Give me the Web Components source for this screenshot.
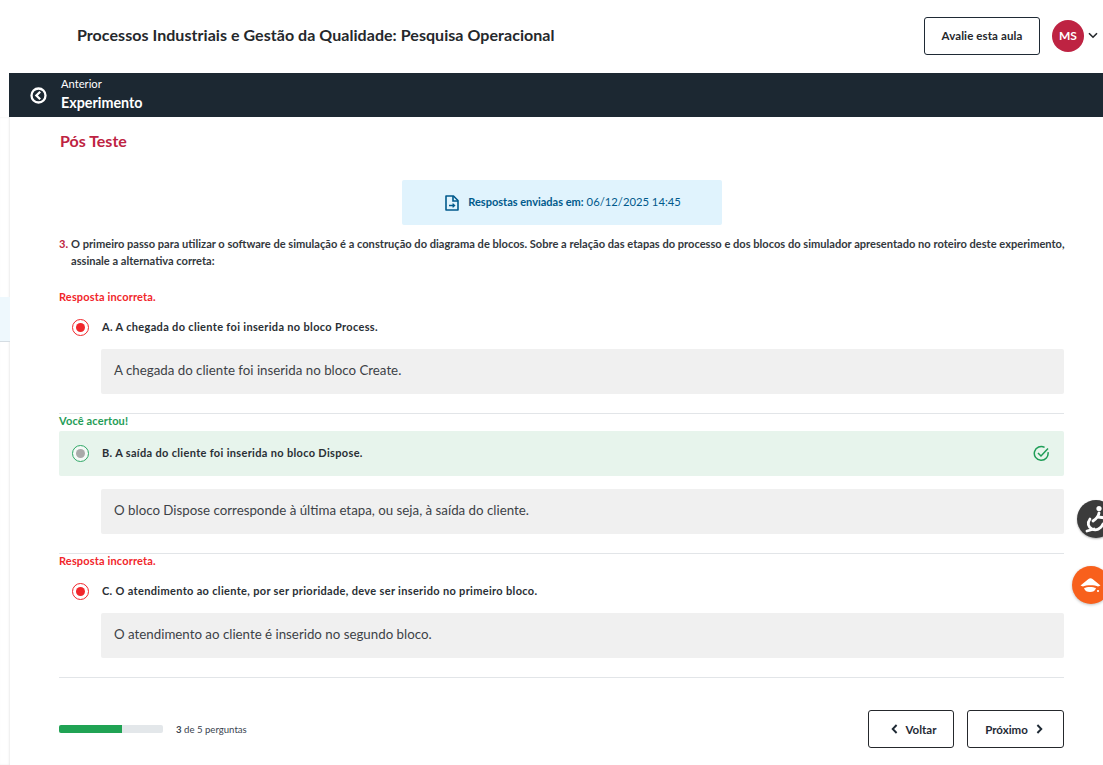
<!DOCTYPE html>
<html lang="pt-BR">
<head>
<meta charset="utf-8">
<title>Pós Teste</title>
<style>
html,body{margin:0;padding:0;height:765px;overflow:hidden;background:#fff;font-family:Lato,"Open Sans",sans-serif;color:#2a2f35}
</style>
</head>
<body>
<app-shell>
  <course-header slot="header" title-text="Processos Industriais e Gestão da Qualidade: Pesquisa Operacional"></course-header>
  <lesson-bar slot="bar"></lesson-bar>
  <section-title>Pós Teste</section-title>
  <submit-banner>06/12/2025 14:45</submit-banner>
  <question-text num="3.">O primeiro passo para utilizar o software de simulação é a construção do diagrama de blocos. Sobre a relação das etapas do processo e dos blocos do simulador apresentado no roteiro deste experimento, assinale a alternativa correta:</question-text>
  <answer-option state="wrong" label="A. A chegada do cliente foi inserida no bloco Process." top="21">A chegada do cliente foi inserida no bloco Create.</answer-option>
  <answer-option state="right" label="B. A saída do cliente foi inserida no bloco Dispose.">O bloco Dispose corresponde à última etapa, ou seja, à saída do cliente.</answer-option>
  <answer-option state="wrong" label="C. O atendimento ao cliente, por ser prioridade, deve ser inserido no primeiro bloco.">O atendimento ao cliente é inserido no segundo bloco.</answer-option>
  <quiz-footer></quiz-footer>
</app-shell>
<float-widgets></float-widgets>
<script>
function def(name, css, html){
  customElements.define(name, class extends HTMLElement{
    connectedCallback(){
      if(this.shadowRoot) return;
      const r=this.attachShadow({mode:'open'});
      const get=k=>this.getAttribute(k)||'';
      r.innerHTML='<style>'+css+'</style>'+(typeof html==='function'?html(get):html);
    }
  });
}
const chevL='<svg width="7" height="10" viewBox="0 0 7 10" fill="none" stroke="currentColor" stroke-width="1.9"><path d="M5.6 1 1.7 5l3.9 4"/></svg>';
const chevR='<svg width="7" height="10" viewBox="0 0 7 10" fill="none" stroke="currentColor" stroke-width="1.9"><path d="M1.4 1l3.9 4-3.9 4"/></svg>';

def('app-shell',`
  :host{display:block;height:765px;overflow:hidden}
  .cols{display:flex;height:648px}
  .side{flex:0 0 10px;width:10px;box-shadow:inset -1px 0 2px rgba(0,0,0,.08);padding-top:180px;box-sizing:border-box}
  .side i{display:block;height:45px;background:#eef8fd;border-bottom:1px solid #d5dde3;box-sizing:border-box}
  main{flex:1;min-width:0;padding:0 39px 0 49px;box-sizing:border-box}
  .barrow{padding-left:9px}
`,`<slot name="header"></slot><div class="barrow"><slot name="bar"></slot></div><div class="cols"><div class="side"><i></i></div><main><slot></slot></main></div>`);

def('course-header',`
  :host{display:flex;align-items:center;height:73px;box-sizing:border-box;padding:0 0 0 77px;background:#fff}
  h1{flex:1;margin:0;font:700 16px/22px Lato,sans-serif;color:#25282c;position:relative;top:-2px;letter-spacing:.05px}
  button{width:116px;height:38px;background:#fff;border:1px solid #1f2a35;border-radius:3px;font:700 11.5px Lato,sans-serif;color:#25282c;padding:0;position:relative;top:-1px;letter-spacing:.01em}
  .av{width:32px;height:32px;border-radius:50%;background:#be2342;color:#fff;font:700 12px/32px Lato,sans-serif;text-align:center;margin-left:12px;position:relative;top:-1px}
  svg{margin:0 5px 0 4px;color:#25282c;position:relative;top:-1px}
`,g=>`<h1>${g('title-text')}</h1><button>Avalie esta aula</button><div class="av">MS</div><svg width="10" height="7" viewBox="0 0 10 7" fill="none" stroke="currentColor" stroke-width="1.6"><path d="M1 1.2 5 5.2l4-4"/></svg>`);

def('lesson-bar',`
  :host{display:flex;align-items:center;height:44px;background:#1c2832;color:#fff;padding-left:21px}
  svg{flex:none;margin-right:14px}
  .t{display:flex;flex-direction:column}
  .a{font:400 11.2px/14px Lato,sans-serif;margin-top:-1px}
  .b{font:700 14.3px/18px Lato,sans-serif;margin-top:3px}
`,`<svg width="17" height="17" viewBox="0 0 17 17" fill="none" stroke="#fff" stroke-width="2.3"><circle cx="8.5" cy="8.5" r="7"/><path d="M10.2 4.8 6.4 8.5l3.8 3.7"/></svg><div class="t"><span class="a">Anterior</span><span class="b">Experimento</span></div>`);

def('section-title',`
  :host{display:block;font:700 16px/22px Lato,sans-serif;color:#be2342;padding:13px 0 0 1px}
`,`<slot></slot>`);

def('submit-banner',`
  :host{display:flex;align-items:center;justify-content:center;width:320px;height:45px;box-sizing:border-box;padding:0 0 2px 2px;margin:28px 0 0 343px;background:#e0f3fd;border-radius:2px;color:#005a8c;font:400 11px Lato,sans-serif}
  svg{margin-right:9px;flex:none;position:relative;top:1px}
  b{font-weight:700;margin-right:3px}
  span{font-size:11.25px}
`,`<svg width="14" height="16" viewBox="0 0 14 16" fill="none" stroke="#005a8c" stroke-width="1.6"><path d="M1 1h7.5L13 5.5V15H1z" stroke-linejoin="round"/><path d="M8 1v5h5" /><path d="M4 10.5h5.5M7.6 8.6l2 1.9-2 1.9" stroke-width="1.3"/></svg><b>Respostas enviadas em:</b><span><slot></slot></span>`);

def('question-text',`
  :host{display:flex;margin-top:10px;font:700 11.1px/17px Lato,sans-serif;color:#33383d;margin-right:-2px}
  .n{color:#be2342;flex:0 0 12px}
  div{flex:1;min-width:0}
`,g=>`<span class="n">${g('num')}</span><div><slot></slot></div>`);

def('answer-option',`
  :host{display:block}
  .status{font:700 11px/14px Lato,sans-serif;height:14px;letter-spacing:.15px}
  .wrong .status{color:#f1262b}
  .right .status{color:#1f9d57}
  .row{display:flex;align-items:center;height:45px;padding-left:13px;border-radius:2px;font:700 11px/14px Lato,sans-serif;color:#2a2f35;letter-spacing:.33px}
  .right .row{background:#e7f4ec;margin-top:3px}
  .wrong .row{height:46px}
  .radio{width:17px;height:17px;box-sizing:border-box;border-radius:50%;border:1.5px solid #f1262b;display:flex;align-items:center;justify-content:center;margin-right:13px;flex:none;background:#fff}
  .radio i{width:9px;height:9px;border-radius:50%;background:#f1262b}
  .right .radio{border-color:#2fa866;background:#f4f9f6}
  .right .radio i{background:#a9a9a9}
  .lab{flex:1;position:relative;top:-1px}
  .wrong .lab{top:0}
  .chk{margin-right:14px}
  .fb{margin-left:42px;height:45px;box-sizing:border-box;padding:0 0 3px 13px;background:#f0f0f0;border-radius:2px;display:flex;align-items:center;font:400 13.3px Lato,sans-serif;color:#3d4247;margin-top:13px}
  .wrong .fb{margin-top:-1px}
  hr{border:0;border-top:1px solid #e2e5e8;margin:19px 0 0}
`,g=>{
  const right=g('state')==='right';
  return `<div class="${g('state')}" style="padding-top:${g('top')||0}px">
    <div class="status">${right?'Você acertou!':'Resposta incorreta.'}</div>
    <div class="row"><span class="radio"><i></i></span><span class="lab">${g('label')}</span>${right?'<svg class="chk" width="17" height="17" viewBox="0 0 17 17" fill="none" stroke="#1f9d57" stroke-width="1.5"><path d="M15 7.2A6.9 6.9 0 1 1 11.6 2.4"/><path d="M5 8l3 3 7-7.4"/></svg>':''}</div>
    <div class="fb"><slot></slot></div>
    <hr>
  </div>`;
});

def('quiz-footer',`
  :host{display:flex;align-items:center;margin-top:32px;height:38px}
  .bar{width:104px;height:8px;background:#e3e7ea;border-radius:2px;overflow:hidden;flex:none}
  .bar i{display:block;width:63px;height:8px;background:#20a354}
  .txt{flex:1;margin-left:13px;font:400 9.6px Lato,sans-serif;color:#3a4450}
  .txt b{font-weight:700}
  button{height:38px;background:#fff;border:1px solid #25282c;border-radius:3px;font:700 11.5px Lato,sans-serif;color:#1f2a35;display:flex;align-items:center;justify-content:center;padding:0;box-sizing:border-box}
  .v{width:86px;margin-right:13px;padding-left:5px}
  .v svg{margin-right:8px}
  .p{width:97px;padding-right:3px}
  .p svg{margin-left:8px}
`,`<div class="bar"><i></i></div><div class="txt"><b>3</b> de 5 perguntas</div><button class="v">${chevL}Voltar</button><button class="p">Próximo${chevR}</button>`);

def('float-widgets',`
  :host{display:block}
  .w{position:fixed;width:38px;height:38px;border-radius:50%;display:flex;align-items:center;justify-content:center;overflow:hidden}
  .a{left:1077px;top:500px;background:#3b3b3b;box-shadow:0 1px 2px rgba(0,0,0,.3)}
  .o{left:1072px;top:566px;background:#f8601c;box-shadow:0 1px 3px rgba(0,0,0,.25)}
`,`<div class="w a"><svg width="38" height="38" viewBox="0 0 38 38" fill="none" stroke="#fff" stroke-width="2.8" stroke-linecap="round"><circle cx="22" cy="8.5" r="2.6" fill="#fff" stroke="none"/><path d="M22 13c-.5 3-3 6-6 8"/><path d="M13 19c-3 4-2 8 2 10 4 2 9 0 11-5"/><path d="M21 17l8 1"/><path d="M10 31l7-2"/></svg></div>
<div class="w o"><svg width="38" height="38" viewBox="0 0 38 38" fill="#fff"><path d="M16.5 13c1-1 3-1 4 0l8 6.5-2.5 1C23 18.8 14 18.8 11 20.5L8.500 19.500z"/><path d="M12 22c3-1.500 9-1.500 12 0-1 3-3 4-6 4s-5-1-6-4z"/><circle cx="26" cy="25" r="1.1"/></svg></div>`);
</script>
</body>
</html>
